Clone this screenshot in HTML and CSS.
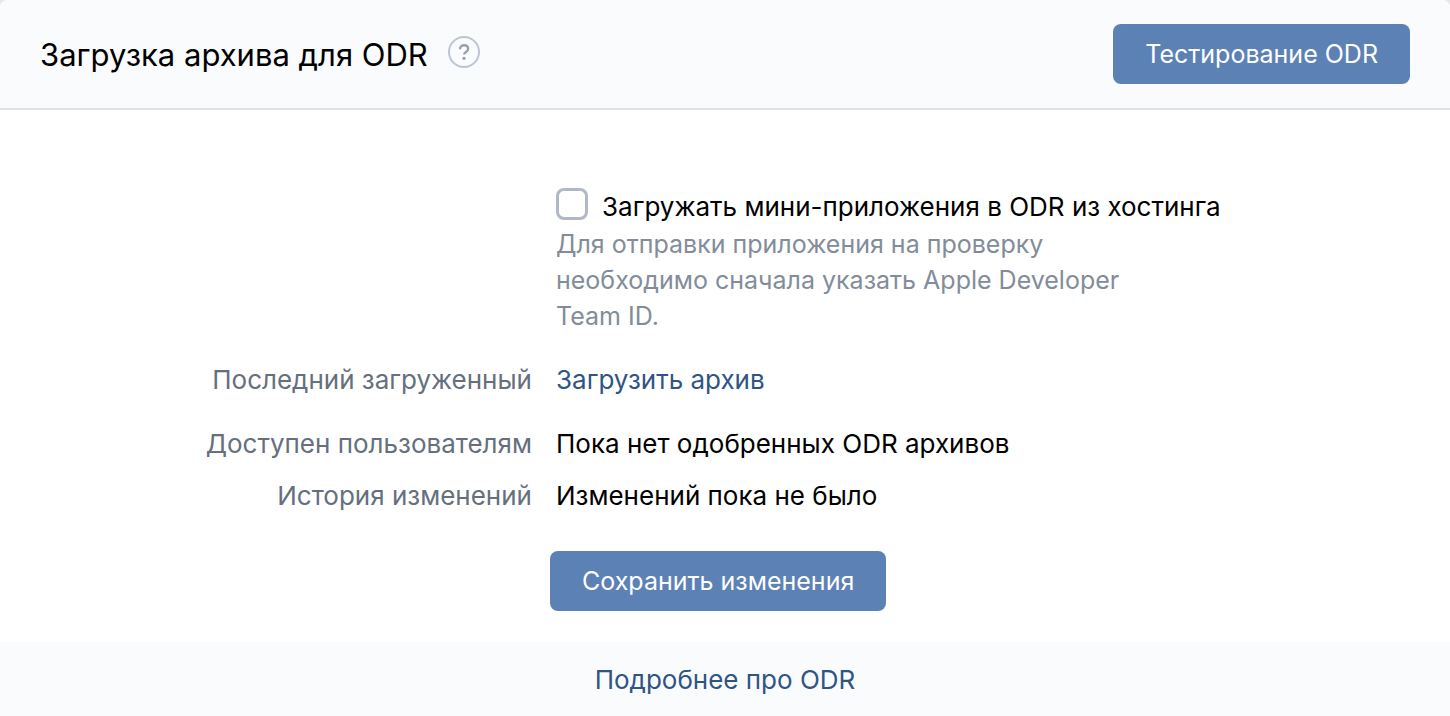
FILE: index.html
```html
<!DOCTYPE html>
<html lang="ru">
<head>
<meta charset="utf-8">
<title>Загрузка архива для ODR</title>
<link rel="stylesheet" href="styles.css">
</head>
<body>
<main class="panel">
  <header class="panel-header">
    <h1 class="title">Загрузка архива для ODR</h1>
    <button class="help" type="button" aria-label="Справка">
      <svg viewBox="0 0 32 32" width="32" height="32" fill="none" stroke="currentColor"><circle cx="16" cy="16" r="15" stroke="#bcc5d3" stroke-width="2"/><path d="M12 13.200c0-2.500 1.700-4 4.100-4 2.300 0 4 1.400 4 3.500 0 1.500-.8 2.400-2.100 3.200-1.300.8-1.900 1.400-1.900 2.700" stroke-width="2.400"/><circle cx="16" cy="22.300" r="1.600" fill="currentColor" stroke="none"/></svg>
    </button>
    <button class="button header-action" type="button">Тестирование ODR</button>
  </header>
  <form class="form">
    <div class="option">
      <div class="check-row">
        <input class="checkbox" type="checkbox" id="hosting">
        <label class="check-label" for="hosting">Загружать мини-приложения в ODR из хостинга</label>
      </div>
      <p class="hint">Для отправки приложения на проверку необходимо сначала указать Apple Developer Team ID.</p>
    </div>
    <dl class="details">
      <div class="row row-spaced"><dt>Последний загруженный</dt><dd><a class="link" href="#upload">Загрузить архив</a></dd></div>
      <div class="row"><dt>Доступен пользователям</dt><dd>Пока нет одобренных ODR архивов</dd></div>
      <div class="row"><dt>История изменений</dt><dd>Изменений пока не было</dd></div>
    </dl>
    <button class="button save" type="button">Сохранить изменения</button>
  </form>
  <footer class="panel-footer"><a class="link" href="#about">Подробнее про ODR</a></footer>
</main>
</body>
</html>
```
FILE: styles.css
```css
* { box-sizing: border-box; }
body {
  margin: 0;
  background: #e6e8ec;
  color: #000;
  font: 26px/36px Inter, Roboto, sans-serif;
}
.panel {
  min-height: 100vh;
  display: flex;
  flex-direction: column;
  background: #fff;
  border-radius: 8px 8px 0 0;
  overflow: hidden;
}
.panel-header {
  display: flex;
  align-items: center;
  padding: 24px 40px;
  background: #fafbfd;
  border-bottom: 2px solid #dee1e8;
}
.title {
  margin: 0;
  padding-top: 2px;
  font-size: 31px;
  line-height: 40px;
  font-weight: 400;
}
.help {
  display: flex;
  margin-left: 20px;
  padding: 0 0 4px;
  border: 0;
  background: none;
  color: #99a0ab;
}
.button {
  height: 60px;
  padding: 0 32px;
  border: 0;
  border-radius: 8px;
  background: #5c81b5;
  color: #fff;
  font: inherit;
  font-size: 25px;
}
.header-action { margin-left: auto; }
.form {
  display: flex;
  flex-direction: column;
  flex: 1;
  padding: 78px 40px 31px;
}
.option { margin-left: 516px; }
.check-row {
  display: flex;
  align-items: flex-start;
  gap: 14px;
}
.check-label { line-height: 38px; }
.checkbox {
  appearance: none;
  flex: none;
  width: 32px;
  height: 32px;
  margin: 0;
  border: 3px solid #b0b8c4;
  border-radius: 8px;
  background: #fff;
}
.hint {
  max-width: 580px;
  margin: 0;
  font-size: 25px;
  color: #828c9a;
}
.details { margin: 28px 0 0; }
.row {
  display: flex;
  gap: 24px;
  margin-bottom: 16px;
}
.row-spaced { margin-bottom: 28px; }
dt {
  width: 492px;
  text-align: right;
  color: #656f7d;
}
dd { margin: 0; }
.link {
  color: #2f5585;
  text-decoration: none;
}
.save {
  align-self: flex-start;
  margin: 21px 0 0 510px;
}
.panel-footer {
  padding: 20px 20px 18px;
  text-align: center;
  background: #fafbfd;
}
```
